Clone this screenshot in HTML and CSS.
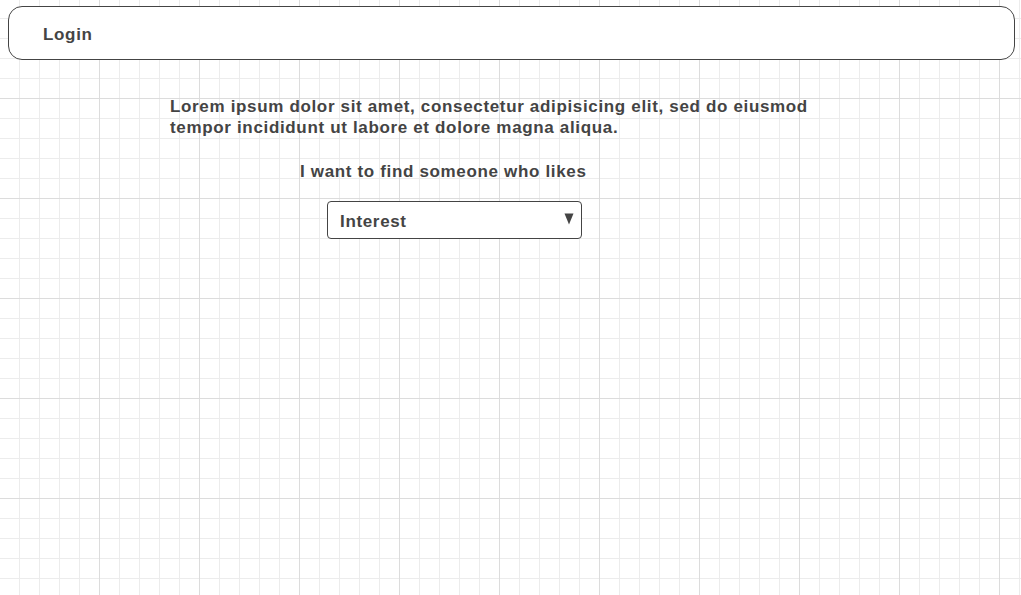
FILE: index.html
```html
<!DOCTYPE html>
<html>
<head>
<meta charset="utf-8">
<link rel="stylesheet" href="styles.css">
</head>
<body>
<header class="topbar"><span class="login">Login</span></header>
<main class="content">
  <p class="intro">Lorem ipsum dolor sit amet, consectetur adipisicing elit, sed do eiusmod<br>tempor incididunt ut labore et dolore magna aliqua.</p>
  <p class="prompt">I want to find someone who likes</p>
  <div class="select"><span class="select-label">Interest</span><svg class="arrow" width="10" height="12" viewBox="0 0 10 12"><path d="M0.5 0.5 H9.5 L5 11.5 Z" fill="#444"/></svg></div>
</main>
</body>
</html>
```
FILE: styles.css
```css
html, body {
  margin: 0;
  padding: 0;
}
body {
  width: 1021px;
  height: 595px;
  overflow: hidden;
  font-family: "Liberation Sans", Arial, sans-serif;
  font-weight: bold;
  font-size: 17px;
  letter-spacing: 0.66px;
  color: #444;
  background-color: #fff;
  background-image:
    linear-gradient(to right, #dcdcdc 1px, transparent 1px),
    linear-gradient(to bottom, #dcdcdc 1px, transparent 1px),
    linear-gradient(to right, #ececec 1px, transparent 1px),
    linear-gradient(to bottom, #ececec 1px, transparent 1px);
  background-size: 100px 100px, 100px 100px, 20px 20px, 20px 20px;
  background-position: 99px 98px, 99px 98px, 19px 18px, 19px 18px;
}
.topbar {
  margin: 6px 6px 0 8px;
  box-sizing: content-box;
  border: 1px solid #444;
  border-radius: 14px;
  background: #fff;
  display: flex;
  align-items: center;
  padding: 4px 0 0 34px;
  height: 48px;
}
.content {
  padding-left: 170px;
  padding-top: 36px;
}
.intro {
  margin: 0;
  line-height: 21px;
}
.prompt {
  margin: 23px 0 0 130px;
  line-height: 21px;
}
.select {
  margin: 19px 0 0 157px;
  width: 234px;
  height: 33px;
  border: 1px solid #444;
  border-radius: 4px;
  background: #fff;
  display: flex;
  align-items: center;
  justify-content: space-between;
  padding: 3px 7px 0 12px;
}
.arrow {
  display: block;
  margin-top: -5px;
}
```
